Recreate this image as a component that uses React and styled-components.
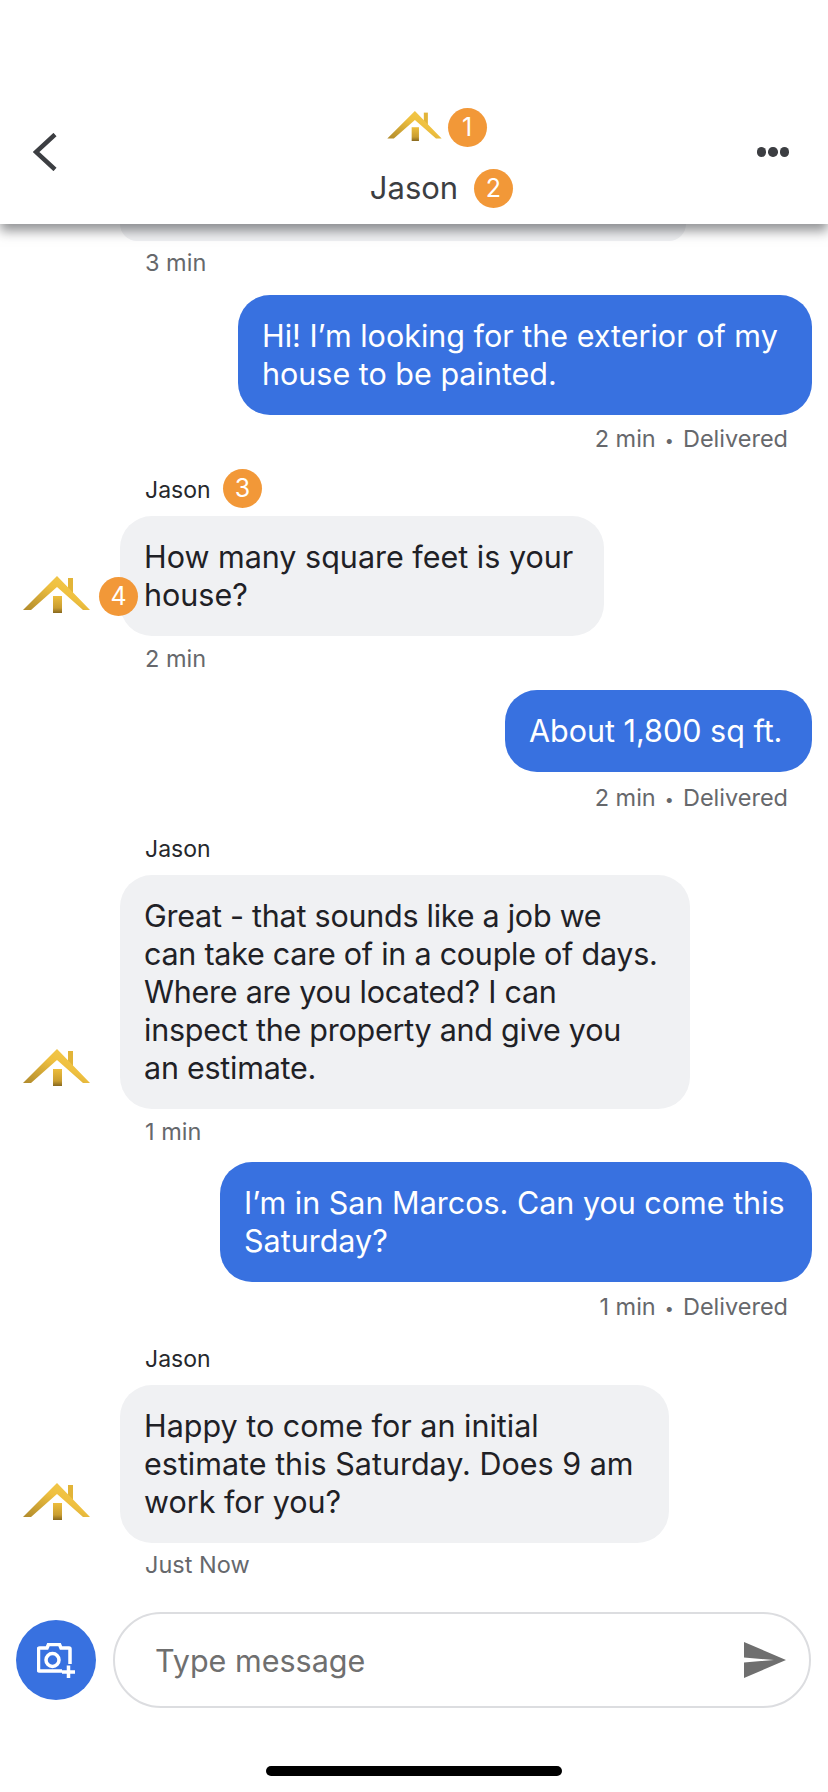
import React from "react";
import styled, { createGlobalStyle } from "styled-components";

const Global = createGlobalStyle`
  html, body { margin: 0; padding: 0; background: #fff; }
  body { font-family: Inter, Roboto, "Liberation Sans", sans-serif; }
`;

const Page = styled.div`
  width: 828px;
  height: 1792px;
  overflow: hidden;
  display: flex;
  flex-direction: column;
  background: #fff;
`;

const Header = styled.header`
  position: relative;
  z-index: 2;
  height: 224px;
  box-sizing: border-box;
  padding: 111px 33px 0;
  display: grid;
  grid-template-columns: 1fr auto 1fr;
  background: #fff;
  box-shadow: 0 7px 11px rgba(40, 42, 46, 0.5);
`;

const BackButton = styled.div`
  margin-top: 22px;
  width: 24px;
  height: 38px;
  color: #3c3e42;
`;

const Title = styled.div`
  display: flex;
  flex-direction: column;
  align-items: center;
`;

const Anchor = styled.div`
  position: relative;
  display: flex;
`;

const HeaderName = styled.div`
  margin-top: 28px;
  font-size: 31px;
  line-height: 38px;
  color: #3c3e42;
`;

const Badge = styled.span`
  position: absolute;
  top: ${(p) => p.$top}px;
  left: ${(p) => p.$left}px;
  width: 39px;
  height: 39px;
  border-radius: 50%;
  background: #f29838;
  color: #fff;
  font-size: 25px;
  line-height: 39px;
  text-align: center;
`;

const Dots = styled.div`
  margin: 36px 6px 0 0;
  justify-self: end;
  display: flex;
  gap: 2px;
  height: 10px;
`;

const Dot = styled.span`
  width: 9.5px;
  height: 9.5px;
  border-radius: 50%;
  background: #3c3e42;
`;

const Thread = styled.main`
  flex: 1;
  display: flex;
  flex-direction: column;
`;

const Tail = styled.div`
  margin-left: 120px;
  width: 566px;
  height: 17px;
  border-radius: 0 0 30px 30px;
  background: #f0f1f3;
`;

const Meta = styled.div`
  font-size: 23.5px;
  line-height: 26px;
  color: #66686c;
  margin-top: ${(p) => p.$top || 10}px;
`;

const MetaDot = styled.span`
  font-size: 16px;
  line-height: 0;
  margin: 0 2.5px;
  vertical-align: 1px;
`;

const Incoming = styled.section`
  display: flex;
  flex-direction: column;
  padding-left: 23px;
  margin-top: ${(p) => p.$top || 0}px;
`;

const Sender = styled.div`
  position: relative;
  margin: 0 0 13px 122px;
  font-size: 23px;
  line-height: 26px;
  color: #26282c;
`;

const BubbleRow = styled.div`
  position: relative;
  display: flex;
  align-items: flex-end;
`;

const AvatarSlot = styled.div`
  width: 97px;
  flex: none;
  display: flex;
  margin-bottom: 23px;
`;

const Bubble = styled.div`
  box-sizing: border-box;
  width: ${(p) => p.$width}px;
  padding: 22px 24px;
  border-radius: 32px;
  font-size: 30.5px;
  line-height: 38px;
  letter-spacing: ${(p) => (p.$tight ? "-0.25px" : "normal")};
  background: ${(p) => (p.$out ? "#3871e0" : "#f0f1f3")};
  color: ${(p) => (p.$out ? "#fff" : "#1f2126")};
`;

const IncomingMeta = styled(Meta)`
  margin-left: 122px;
`;

const TailMeta = styled(Meta)`
  margin-left: 145px;
`;

const Outgoing = styled.section`
  display: flex;
  flex-direction: column;
  align-items: flex-end;
  padding-right: 16px;
  margin-top: ${(p) => p.$top || 18}px;
`;

const OutgoingMeta = styled(Meta)`
  margin-right: 24px;
  margin-top: ${(p) => p.$top || 11}px;
`;

const Composer = styled.footer`
  display: flex;
  align-items: center;
  gap: 17px;
  padding: 0 17px 0 16px;
  height: 96px;
`;

const CameraButton = styled.div`
  width: 80px;
  height: 80px;
  flex: none;
  border-radius: 50%;
  background: #3871e0;
  display: flex;
  align-items: center;
  justify-content: center;
`;

const InputBox = styled.div`
  flex: 1;
  height: 96px;
  box-sizing: border-box;
  border: 2px solid #dcdde0;
  border-radius: 48px;
  padding: 0 23px 0 40px;
  display: flex;
  align-items: center;
  justify-content: space-between;
`;

const Placeholder = styled.span`
  font-size: 30.5px;
  color: #6f6f6f;
`;

const HomeZone = styled.div`
  height: 84px;
  box-sizing: border-box;
  padding-top: 58px;
  display: flex;
  justify-content: center;
`;

const HomeBar = styled.div`
  width: 296px;
  height: 10px;
  border-radius: 5px;
  background: #000;
`;

const Logo = ({ width, height, id }) => (
  <svg width={width} height={height} viewBox="0 0 67 37">
    <defs>
      <linearGradient id={`${id}r`} x1="0" y1="1" x2="1" y2="0">
        <stop offset="0" stopColor="#b08a2c" />
        <stop offset="0.55" stopColor="#efc03f" />
        <stop offset="1" stopColor="#f3cc52" />
      </linearGradient>
      <linearGradient id={`${id}d`} x1="0" y1="0" x2="0" y2="1">
        <stop offset="0" stopColor="#edbd3c" />
        <stop offset="0.7" stopColor="#c99d30" />
        <stop offset="1" stopColor="#87681f" />
      </linearGradient>
    </defs>
    <path d="M45 2h5v18h-5z" fill="#e2b438" />
    <path d="M0 34 34 0l33 34h-7L34 11 8 34z" fill={`url(#${id}r)`} />
    <path d="M30 20h9v17h-9z" fill={`url(#${id}d)`} />
  </svg>
);

const CameraIcon = () => (
  <svg width="38" height="35" viewBox="0 0 38 35" fill="none" stroke="#fff" strokeWidth="3.500">
    <path d="M25 28H2.500a1 1 0 0 1-1-1V6a1 1 0 0 1 1-1H10l1.500-3.500h11L24 5h8a1 1 0 0 1 1 1v15" />
    <circle cx="15.500" cy="17" r="6.500" />
    <path d="M31.500 22.500v12.500M25 29h13" />
  </svg>
);

const App = () => (
  <Page>
    <Global />
    <Header>
      <BackButton>
        <svg width="24" height="38" viewBox="0 0 24 38" fill="none" stroke="currentColor" strokeWidth="4.500">
          <path d="M22 1.500 3 19l19 17.500" />
        </svg>
      </BackButton>
      <Title>
        <Anchor>
          <Logo width={55} height={30} id="head" />
          <Badge $top={-3} $left={61}>1</Badge>
        </Anchor>
        <Anchor>
          <HeaderName>Jason</HeaderName>
          <Badge $top={28} $left={104}>2</Badge>
        </Anchor>
      </Title>
      <Dots>
        <Dot />
        <Dot />
        <Dot />
      </Dots>
    </Header>
    <Thread>
      <Tail />
      <TailMeta $top={9}>3 min</TailMeta>
      <Outgoing $top={19}>
        <Bubble $out $width={574}>Hi! I’m looking for the exterior of my house to be painted.</Bubble>
        <OutgoingMeta>2 min <MetaDot>•</MetaDot> Delivered</OutgoingMeta>
      </Outgoing>
      <Incoming $top={25}>
        <Sender>
          Jason
          <Badge $top={-8} $left={78}>3</Badge>
        </Sender>
        <BubbleRow>
          <AvatarSlot>
            <Logo width={67} height={37} id="a1" />
          </AvatarSlot>
          <Bubble $width={484}>How many square feet is your house?</Bubble>
          <Badge $top={61} $left={76}>4</Badge>
        </BubbleRow>
        <IncomingMeta>2 min</IncomingMeta>
      </Incoming>
      <Outgoing>
        <Bubble $out $width={307}>About 1,800 sq ft.</Bubble>
        <OutgoingMeta $top={13}>2 min <MetaDot>•</MetaDot> Delivered</OutgoingMeta>
      </Outgoing>
      <Incoming $top={25}>
        <Sender>Jason</Sender>
        <BubbleRow>
          <AvatarSlot>
            <Logo width={67} height={37} id="a2" />
          </AvatarSlot>
          <Bubble $width={570} $tight>
            Great - that sounds like a job we
            <br />
            can take care of in a couple of days. Where are you located? I can inspect the property and give you
            <br />
            an estimate.
          </Bubble>
        </BubbleRow>
        <IncomingMeta>1 min</IncomingMeta>
      </Incoming>
      <Outgoing $top={17}>
        <Bubble $out $width={592}>I’m in San Marcos. Can you come this Saturday?</Bubble>
        <OutgoingMeta $top={12}>1 min <MetaDot>•</MetaDot> Delivered</OutgoingMeta>
      </Outgoing>
      <Incoming $top={26}>
        <Sender>Jason</Sender>
        <BubbleRow>
          <AvatarSlot>
            <Logo width={67} height={37} id="a3" />
          </AvatarSlot>
          <Bubble $width={549}>Happy to come for an initial estimate this Saturday. Does 9 am work for you?</Bubble>
        </BubbleRow>
        <IncomingMeta $top={9}>Just Now</IncomingMeta>
      </Incoming>
    </Thread>
    <Composer>
      <CameraButton>
        <CameraIcon />
      </CameraButton>
      <InputBox>
        <Placeholder>Type message</Placeholder>
        <svg width="42" height="36" viewBox="0 0 42 36">
          <path d="M0 0 42 18 0 36V20.500L30 18 0 15.500z" fill="#6f6f6f" />
        </svg>
      </InputBox>
    </Composer>
    <HomeZone>
      <HomeBar />
    </HomeZone>
  </Page>
);

export default App;
